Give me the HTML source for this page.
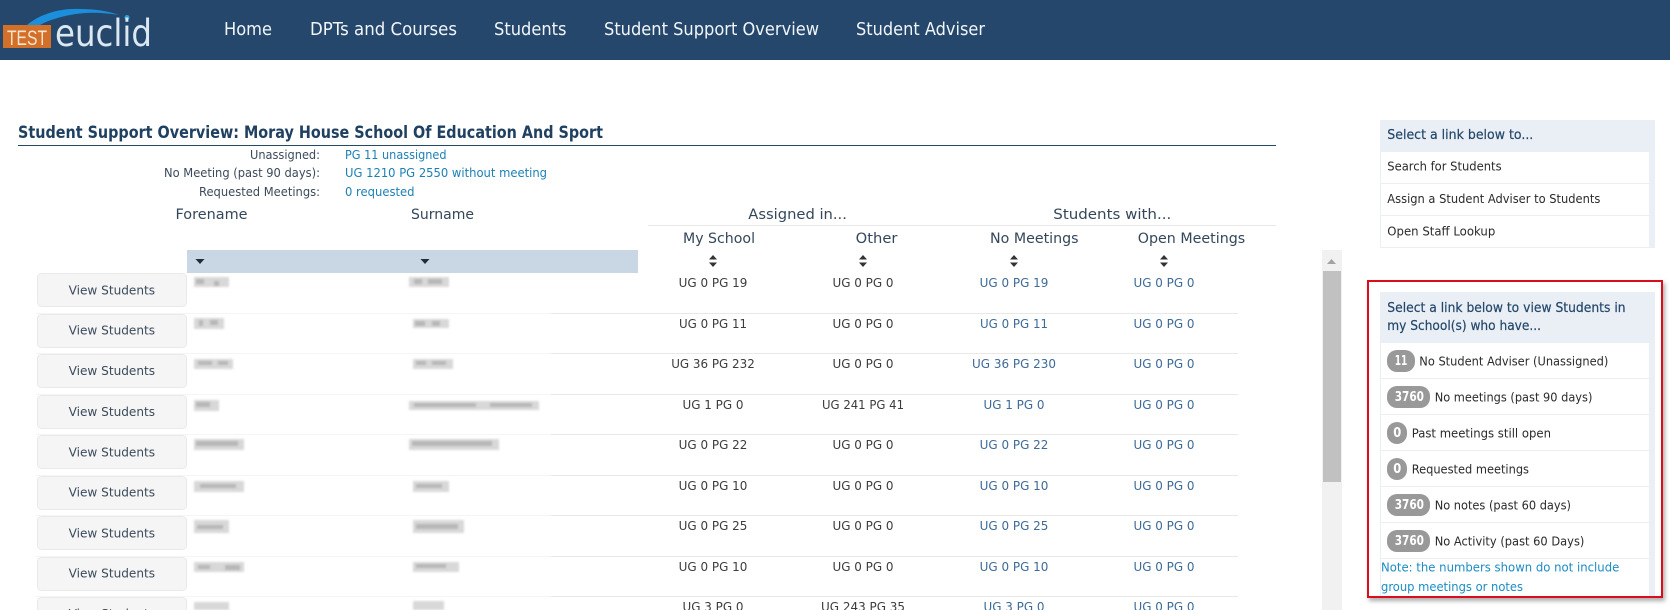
<!DOCTYPE html>
<html lang="en">
<head>
<meta charset="utf-8">
<title>Student Support Overview</title>
<style>
html,body{margin:0;padding:0;background:#fff;width:1670px;height:610px;overflow:hidden}
svg{display:block;position:absolute;left:0;top:0}
text{font-family:"DejaVu Sans","Liberation Sans",sans-serif;font-size:12px;fill:#3b4a5a}
.nav{font-size:18px;fill:#f1f5f9}
.ttl{font-size:17px;font-weight:bold;fill:#1f4060}
.lnk{fill:#1c80b4}
.h{font-size:14.500px;fill:#34475a}
.d{fill:#3c3c3c;text-anchor:middle}
.dl{fill:#3d6a99;text-anchor:middle}
.ph{font-size:13px;fill:#24476b;stroke:#24476b;stroke-width:.2px}
.it{fill:#2a2a2a}
.bt{fill:#fff;font-weight:bold;font-size:13px}
.btn{fill:#f5f5f5;stroke:#e9e9e9}
.n{fill:#d8d8d8}
.k{fill:#b6b6b6}
</style>
</head>
<body>
<svg width="1670" height="610" viewBox="0 0 1670 610" xmlns="http://www.w3.org/2000/svg">
<defs>
<filter id="b" x="-10%" y="-30%" width="120%" height="160%"><feGaussianBlur stdDeviation="1.100"/></filter>
<filter id="s" x="-5%" y="-5%" width="110%" height="110%"><feDropShadow dx="2" dy="3" stdDeviation="2" flood-color="#777" flood-opacity="0.6"/></filter>
</defs>

<!-- header -->
<rect x="0" y="0" width="1670" height="60" fill="#24476b"/>
<path d="M27 25C40 14 60 8 80 9C95 9 108 11 119 15C100 12 85 12 70 15C55 18 45 22 40 25Z" fill="#1b8fdc"/>
<circle cx="127" cy="17.500" r="2.500" fill="#2a9fe0"/>
<rect x="3" y="25" width="48" height="23" fill="#d2702a"/>
<text x="7" y="45" textLength="40" lengthAdjust="spacingAndGlyphs" style="font-size:21px;fill:#f9e3cf;font-family:'Liberation Sans',sans-serif">TEST</text>
<text x="55" y="46" textLength="97" lengthAdjust="spacingAndGlyphs" style="font-size:37px;fill:#dbe7f1;font-weight:normal;font-family:'DejaVu Sans',sans-serif">euclid</text>
<text class="nav" x="224" y="35" textLength="48" lengthAdjust="spacingAndGlyphs">Home</text>
<text class="nav" x="310" y="35" textLength="147" lengthAdjust="spacingAndGlyphs">DPTs and Courses</text>
<text class="nav" x="494" y="35" textLength="72.500" lengthAdjust="spacingAndGlyphs">Students</text>
<text class="nav" x="604" y="35" textLength="215" lengthAdjust="spacingAndGlyphs">Student Support Overview</text>
<text class="nav" x="856" y="35" textLength="129" lengthAdjust="spacingAndGlyphs">Student Adviser</text>

<!-- title -->
<text class="ttl" x="18" y="138" textLength="585" lengthAdjust="spacingAndGlyphs">Student Support Overview: Moray House School Of Education And Sport</text>
<rect x="18" y="145" width="1258" height="1" fill="#24476b"/>

<!-- summary -->
<text x="250" y="159" textLength="70" lengthAdjust="spacingAndGlyphs">Unassigned:</text>
<text x="164" y="177" textLength="156" lengthAdjust="spacingAndGlyphs">No Meeting (past 90 days):</text>
<text x="199" y="196" textLength="121" lengthAdjust="spacingAndGlyphs">Requested Meetings:</text>
<text class="lnk" x="345" y="159" textLength="101.500" lengthAdjust="spacingAndGlyphs">PG 11 unassigned</text>
<text class="lnk" x="345" y="177" textLength="202" lengthAdjust="spacingAndGlyphs">UG 1210 PG 2550 without meeting</text>
<text class="lnk" x="345" y="196" textLength="69.500" lengthAdjust="spacingAndGlyphs">0 requested</text>

<!-- column headers -->
<text class="h" x="175.500" y="219" textLength="72" lengthAdjust="spacingAndGlyphs">Forename</text>
<text class="h" x="411" y="219" textLength="63" lengthAdjust="spacingAndGlyphs">Surname</text>
<text class="h" x="748.300" y="219" textLength="98.600" lengthAdjust="spacingAndGlyphs">Assigned in...</text>
<text class="h" x="1053.300" y="219" textLength="118" lengthAdjust="spacingAndGlyphs">Students with...</text>
<rect x="648" y="225" width="628" height="1" fill="#e8e8e8"/>
<text class="h" x="683" y="243" textLength="72" lengthAdjust="spacingAndGlyphs">My School</text>
<text class="h" x="855.700" y="243" textLength="41.800" lengthAdjust="spacingAndGlyphs">Other</text>
<text class="h" x="990" y="243" textLength="88.500" lengthAdjust="spacingAndGlyphs">No Meetings</text>
<text class="h" x="1137.800" y="243" textLength="107.400" lengthAdjust="spacingAndGlyphs">Open Meetings</text>

<rect x="187" y="250" width="451" height="23" fill="#c9d6e4"/>
<path d="M195.500 259h9l-4.500 5zM420.500 259h9l-4.500 5z" fill="#222d3a"/>
<path d="M713 255l4 4.500h-8zM713 267l4-4.500h-8zM863 255l4 4.500h-8zM863 267l4-4.500h-8zM1014 255l4 4.500h-8zM1014 267l4-4.500h-8zM1164 255l4 4.500h-8zM1164 267l4-4.500h-8z" fill="#333"/>

<!-- separators -->
<g fill="#f5f5f5">
<rect x="36" y="313" width="515" height="1"/><rect x="36" y="353" width="515" height="1"/><rect x="36" y="394" width="515" height="1"/><rect x="36" y="434" width="515" height="1"/><rect x="36" y="475" width="515" height="1"/><rect x="36" y="515" width="515" height="1"/><rect x="36" y="556" width="515" height="1"/><rect x="36" y="596" width="515" height="1"/>
</g>
<g fill="#e8e8e8">
<rect x="551" y="313" width="687" height="1"/><rect x="551" y="353" width="687" height="1"/><rect x="551" y="394" width="687" height="1"/><rect x="551" y="434" width="687" height="1"/><rect x="551" y="475" width="687" height="1"/><rect x="551" y="515" width="687" height="1"/><rect x="551" y="556" width="687" height="1"/><rect x="551" y="596" width="687" height="1"/>
</g>

<!-- buttons -->
<g>
<rect class="btn" x="37.500" y="273.500" width="149" height="33" rx="4"/>
<rect class="btn" x="37.500" y="314.500" width="149" height="33" rx="4"/>
<rect class="btn" x="37.500" y="354.500" width="149" height="33" rx="4"/>
<rect class="btn" x="37.500" y="395.500" width="149" height="33" rx="4"/>
<rect class="btn" x="37.500" y="435.500" width="149" height="33" rx="4"/>
<rect class="btn" x="37.500" y="476.500" width="149" height="33" rx="4"/>
<rect class="btn" x="37.500" y="516.500" width="149" height="33" rx="4"/>
<rect class="btn" x="37.500" y="557.500" width="149" height="33" rx="4"/>
<rect class="btn" x="37.500" y="597.500" width="149" height="33" rx="4"/>
</g>
<g>
<text x="68.600" y="294.500" textLength="86.500" lengthAdjust="spacingAndGlyphs">View Students</text>
<text x="68.600" y="334.500" textLength="86.500" lengthAdjust="spacingAndGlyphs">View Students</text>
<text x="68.600" y="375" textLength="86.500" lengthAdjust="spacingAndGlyphs">View Students</text>
<text x="68.600" y="416" textLength="86.500" lengthAdjust="spacingAndGlyphs">View Students</text>
<text x="68.600" y="456.500" textLength="86.500" lengthAdjust="spacingAndGlyphs">View Students</text>
<text x="68.600" y="496.500" textLength="86.500" lengthAdjust="spacingAndGlyphs">View Students</text>
<text x="68.600" y="537.500" textLength="86.500" lengthAdjust="spacingAndGlyphs">View Students</text>
<text x="68.600" y="577.500" textLength="86.500" lengthAdjust="spacingAndGlyphs">View Students</text>
<text x="68.600" y="618" textLength="86.500" lengthAdjust="spacingAndGlyphs">View Students</text>
</g>

<!-- blurred names -->
<g filter="url(#b)">
<rect class="n" x="194" y="277" width="35" height="10"/><rect class="k" x="196" y="279" width="8" height="5"/><rect class="k" x="214" y="281" width="5" height="5"/>
<rect class="n" x="409" y="277" width="40" height="10"/><rect class="k" x="414" y="279" width="8" height="5"/><rect class="k" x="428" y="279" width="14" height="5"/>
<rect class="n" x="194" y="318" width="30" height="11"/><rect class="k" x="199" y="320" width="4" height="6"/><rect class="k" x="210" y="320" width="8" height="5"/>
<rect class="n" x="413" y="319" width="36" height="9"/><rect class="k" x="415" y="321" width="10" height="5"/><rect class="k" x="432" y="321" width="8" height="5"/>
<rect class="n" x="194" y="359" width="39" height="10"/><rect class="k" x="198" y="361" width="14" height="4"/><rect class="k" x="218" y="361" width="10" height="4"/>
<rect class="n" x="413" y="359" width="40" height="10"/><rect class="k" x="416" y="361" width="10" height="4"/><rect class="k" x="432" y="361" width="14" height="4"/>
<rect class="n" x="194" y="400" width="25" height="11"/><rect class="k" x="196" y="402" width="14" height="5"/>
<rect class="n" x="409" y="401" width="130" height="9"/><rect class="k" x="414" y="403" width="62" height="4"/><rect class="k" x="490" y="403" width="42" height="4"/>
<rect class="n" x="194" y="439" width="50" height="11"/><rect class="k" x="196" y="441" width="42" height="5"/>
<rect class="n" x="409" y="439" width="90" height="11"/><rect class="k" x="412" y="441" width="80" height="5"/>
<rect class="n" x="194" y="481" width="50" height="11"/><rect class="k" x="200" y="484" width="36" height="4"/>
<rect class="n" x="413" y="481" width="36" height="11"/><rect class="k" x="416" y="484" width="26" height="4"/>
<rect class="n" x="194" y="520" width="35" height="13"/><rect class="k" x="197" y="525" width="26" height="4"/>
<rect class="n" x="413" y="520" width="51" height="13"/><rect class="k" x="416" y="524" width="42" height="5"/>
<rect class="n" x="194" y="562" width="50" height="10"/><rect class="k" x="198" y="565" width="12" height="4"/><rect class="k" x="225" y="565" width="15" height="5"/>
<rect class="n" x="413" y="562" width="46" height="10"/><rect class="k" x="416" y="564" width="30" height="4"/>
<rect class="n" x="194" y="602" width="35" height="8"/>
<rect class="n" x="413" y="601" width="31" height="9"/>
</g>

<!-- data -->
<g>
<text class="d" x="713" y="287" textLength="68.700" lengthAdjust="spacingAndGlyphs">UG 0 PG 19</text><text class="d" x="863" y="287" textLength="61" lengthAdjust="spacingAndGlyphs">UG 0 PG 0</text><text class="dl" x="1014" y="287" textLength="68.700" lengthAdjust="spacingAndGlyphs">UG 0 PG 19</text><text class="dl" x="1164" y="287" textLength="61" lengthAdjust="spacingAndGlyphs">UG 0 PG 0</text>
<text class="d" x="713" y="328" textLength="68" lengthAdjust="spacingAndGlyphs">UG 0 PG 11</text><text class="d" x="863" y="328" textLength="61" lengthAdjust="spacingAndGlyphs">UG 0 PG 0</text><text class="dl" x="1014" y="328" textLength="68" lengthAdjust="spacingAndGlyphs">UG 0 PG 11</text><text class="dl" x="1164" y="328" textLength="61" lengthAdjust="spacingAndGlyphs">UG 0 PG 0</text>
<text class="d" x="713" y="368" textLength="83.600" lengthAdjust="spacingAndGlyphs">UG 36 PG 232</text><text class="d" x="863" y="368" textLength="61" lengthAdjust="spacingAndGlyphs">UG 0 PG 0</text><text class="dl" x="1014" y="368" textLength="84" lengthAdjust="spacingAndGlyphs">UG 36 PG 230</text><text class="dl" x="1164" y="368" textLength="61" lengthAdjust="spacingAndGlyphs">UG 0 PG 0</text>
<text class="d" x="713" y="409" textLength="61" lengthAdjust="spacingAndGlyphs">UG 1 PG 0</text><text class="d" x="863" y="409" textLength="82" lengthAdjust="spacingAndGlyphs">UG 241 PG 41</text><text class="dl" x="1014" y="409" textLength="61" lengthAdjust="spacingAndGlyphs">UG 1 PG 0</text><text class="dl" x="1164" y="409" textLength="61" lengthAdjust="spacingAndGlyphs">UG 0 PG 0</text>
<text class="d" x="713" y="449" textLength="68.700" lengthAdjust="spacingAndGlyphs">UG 0 PG 22</text><text class="d" x="863" y="449" textLength="61" lengthAdjust="spacingAndGlyphs">UG 0 PG 0</text><text class="dl" x="1014" y="449" textLength="68.700" lengthAdjust="spacingAndGlyphs">UG 0 PG 22</text><text class="dl" x="1164" y="449" textLength="61" lengthAdjust="spacingAndGlyphs">UG 0 PG 0</text>
<text class="d" x="713" y="490" textLength="68.700" lengthAdjust="spacingAndGlyphs">UG 0 PG 10</text><text class="d" x="863" y="490" textLength="61" lengthAdjust="spacingAndGlyphs">UG 0 PG 0</text><text class="dl" x="1014" y="490" textLength="68.700" lengthAdjust="spacingAndGlyphs">UG 0 PG 10</text><text class="dl" x="1164" y="490" textLength="61" lengthAdjust="spacingAndGlyphs">UG 0 PG 0</text>
<text class="d" x="713" y="530" textLength="68.700" lengthAdjust="spacingAndGlyphs">UG 0 PG 25</text><text class="d" x="863" y="530" textLength="61" lengthAdjust="spacingAndGlyphs">UG 0 PG 0</text><text class="dl" x="1014" y="530" textLength="68.700" lengthAdjust="spacingAndGlyphs">UG 0 PG 25</text><text class="dl" x="1164" y="530" textLength="61" lengthAdjust="spacingAndGlyphs">UG 0 PG 0</text>
<text class="d" x="713" y="571" textLength="68.700" lengthAdjust="spacingAndGlyphs">UG 0 PG 10</text><text class="d" x="863" y="571" textLength="61" lengthAdjust="spacingAndGlyphs">UG 0 PG 0</text><text class="dl" x="1014" y="571" textLength="68.700" lengthAdjust="spacingAndGlyphs">UG 0 PG 10</text><text class="dl" x="1164" y="571" textLength="61" lengthAdjust="spacingAndGlyphs">UG 0 PG 0</text>
<text class="d" x="713" y="611" textLength="61" lengthAdjust="spacingAndGlyphs">UG 3 PG 0</text><text class="d" x="863" y="611" textLength="84" lengthAdjust="spacingAndGlyphs">UG 243 PG 35</text><text class="dl" x="1014" y="611" textLength="61" lengthAdjust="spacingAndGlyphs">UG 3 PG 0</text><text class="dl" x="1164" y="611" textLength="61" lengthAdjust="spacingAndGlyphs">UG 0 PG 0</text>
</g>

<!-- scrollbar -->
<rect x="1322" y="250" width="20" height="360" fill="#f1f1f1"/>
<path d="M1331.500 259l4.500 5h-9z" fill="#a3a3a3"/>
<rect x="1323" y="271" width="18" height="211" fill="#c1c1c1"/>

<!-- panel 1 -->
<rect x="1380" y="120" width="275" height="128" fill="#e9eff5"/>
<rect x="1381" y="152" width="268" height="96" fill="#fff"/>
<rect x="1381" y="183" width="268" height="1" fill="#eeeeee"/>
<rect x="1381" y="215" width="268" height="1" fill="#eeeeee"/>
<rect x="1380" y="247" width="269" height="1" fill="#eeeeee"/>
<text class="ph" x="1387.300" y="139" textLength="146" lengthAdjust="spacingAndGlyphs">Select a link below to...</text>
<text class="it" x="1387.300" y="170.500" textLength="114.300" lengthAdjust="spacingAndGlyphs">Search for Students</text>
<text class="it" x="1387.300" y="203" textLength="213" lengthAdjust="spacingAndGlyphs">Assign a Student Adviser to Students</text>
<text class="it" x="1387.300" y="235.500" textLength="108" lengthAdjust="spacingAndGlyphs">Open Staff Lookup</text>

<!-- red box -->
<rect x="1368" y="281" width="294" height="316" fill="#fff" stroke="#d9101a" stroke-width="2" filter="url(#s)"/>

<!-- panel 2 -->
<rect x="1380" y="292" width="275" height="304" fill="#e9eff5"/>
<rect x="1381" y="343" width="268" height="253" fill="#fff"/>
<g fill="#eeeeee">
<rect x="1381" y="378" width="268" height="1"/><rect x="1381" y="414" width="268" height="1"/><rect x="1381" y="450" width="268" height="1"/><rect x="1381" y="486" width="268" height="1"/><rect x="1381" y="522" width="268" height="1"/><rect x="1381" y="558" width="268" height="1"/>
</g>
<text class="ph" x="1387.300" y="312" textLength="238.300" lengthAdjust="spacingAndGlyphs">Select a link below to view Students in</text>
<text class="ph" x="1387.300" y="330" textLength="153.700" lengthAdjust="spacingAndGlyphs">my School(s) who have...</text>

<g fill="#999999">
<rect x="1387" y="350" width="28" height="22" rx="10"/>
<rect x="1387" y="386" width="43" height="22" rx="10"/>
<rect x="1387" y="422" width="20" height="22" rx="10"/>
<rect x="1387" y="458" width="20" height="22" rx="10"/>
<rect x="1387" y="494" width="43" height="22" rx="10"/>
<rect x="1387" y="530" width="43" height="22" rx="10"/>
</g>
<text class="bt" x="1394.700" y="365" textLength="12.700" lengthAdjust="spacingAndGlyphs">11</text>
<text class="bt" x="1394.700" y="401" textLength="29.300" lengthAdjust="spacingAndGlyphs">3760</text>
<text class="bt" x="1393.300" y="437" textLength="8" lengthAdjust="spacingAndGlyphs">0</text>
<text class="bt" x="1393.300" y="473" textLength="8" lengthAdjust="spacingAndGlyphs">0</text>
<text class="bt" x="1394.700" y="509" textLength="29.300" lengthAdjust="spacingAndGlyphs">3760</text>
<text class="bt" x="1394.700" y="545" textLength="29.300" lengthAdjust="spacingAndGlyphs">3760</text>

<text class="it" x="1419.300" y="365.500" textLength="189" lengthAdjust="spacingAndGlyphs">No Student Adviser (Unassigned)</text>
<text class="it" x="1434.700" y="401.500" textLength="157.700" lengthAdjust="spacingAndGlyphs">No meetings (past 90 days)</text>
<text class="it" x="1411.700" y="437.500" textLength="139.300" lengthAdjust="spacingAndGlyphs">Past meetings still open</text>
<text class="it" x="1411.700" y="473.500" textLength="117.300" lengthAdjust="spacingAndGlyphs">Requested meetings</text>
<text class="it" x="1434.700" y="509.500" textLength="136.300" lengthAdjust="spacingAndGlyphs">No notes (past 60 days)</text>
<text class="it" x="1434.700" y="545.500" textLength="149.700" lengthAdjust="spacingAndGlyphs">No Activity (past 60 Days)</text>
<text style="fill:#1c8cc4" x="1381" y="571.500" textLength="238.300" lengthAdjust="spacingAndGlyphs">Note: the numbers shown do not include</text>
<text style="fill:#1c8cc4" x="1381" y="591" textLength="142" lengthAdjust="spacingAndGlyphs">group meetings or notes</text>
</svg>
</body>
</html>
